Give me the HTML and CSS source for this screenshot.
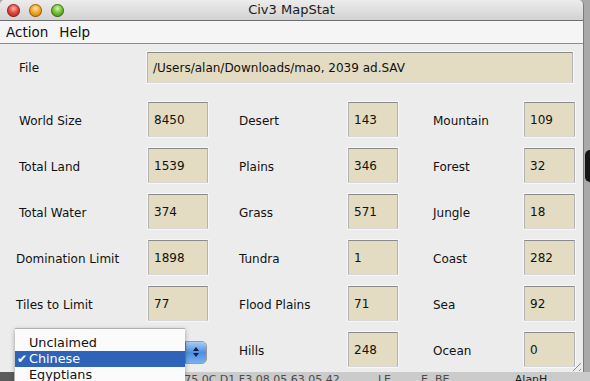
FILE: index.html
```html
<!DOCTYPE html>
<html lang="en">
<head>
    <meta charset="UTF-8">
    <title>Civ3 MapStat</title>
    <link rel="stylesheet" href="styles.css">
</head>
<body>
    <div class="desk">
        <div class="window">
            <div class="titlebar">
                <div class="lights">
                    <span class="light red"></span>
                    <span class="light amber"></span>
                    <span class="light green"></span>
                </div>
                <div class="title">Civ3 MapStat</div>
            </div>
            <div class="menubar">
                <span>Action</span>
                <span>Help</span>
            </div>

            <div class="content">
                <div class="file-row">
                    <label class="file-label">File</label>
                    <div class="field file-field">/Users/alan/Downloads/mao, 2039 ad.SAV</div>
                </div>

                <div class="stats">
                    <span class="lbl">World Size</span><div class="field">8450</div>
                    <span class="lbl col2">Desert</span><div class="field">143</div>
                    <span class="lbl col3">Mountain</span><div class="field">109</div>

                    <span class="lbl">Total Land</span><div class="field">1539</div>
                    <span class="lbl col2">Plains</span><div class="field">346</div>
                    <span class="lbl col3">Forest</span><div class="field">32</div>

                    <span class="lbl">Total Water</span><div class="field">374</div>
                    <span class="lbl col2">Grass</span><div class="field">571</div>
                    <span class="lbl col3">Jungle</span><div class="field">18</div>

                    <span class="lbl tight">Domination Limit</span><div class="field">1898</div>
                    <span class="lbl col2">Tundra</span><div class="field">1</div>
                    <span class="lbl col3">Coast</span><div class="field">282</div>

                    <span class="lbl tight">Tiles to Limit</span><div class="field">77</div>
                    <span class="lbl col2">Flood Plains</span><div class="field">71</div>
                    <span class="lbl col3">Sea</span><div class="field">92</div>

                    <div class="popup-button">
                        <span class="arrows">
                            <svg width="8" height="12" viewBox="0 0 8 12">
                                <path d="M4 1 L7 5 L1 5 Z" fill="#10204a"/>
                                <path d="M4 11 L7 7 L1 7 Z" fill="#10204a"/>
                            </svg>
                        </span>
                    </div>
                    <span class="lbl col2">Hills</span><div class="field">248</div>
                    <span class="lbl col3">Ocean</span><div class="field">0</div>
                </div>
            </div>

            <ul class="popup-menu">
                <li>Unclaimed</li>
                <li class="selected"><span class="check">&#10004;</span>Chinese</li>
                <li>Egyptians</li>
            </ul>

            <div class="grip"></div>
        </div>

        <div class="side-blob"></div>

        <div class="under-strip">
            <span class="dark-end"></span>
            <span class="hex">75 0C D1 F3 08 05 63 05 42 15</span>
            <span class="hex mid">LE</span>
            <span class="hex mid">E&nbsp; BE |</span>
            <span class="user">AlanH [logout]</span>
        </div>
    </div>
</body>
</html>
```

FILE: styles.css
```css
body {
    margin: 0;
    width: 590px;
    height: 381px;
    overflow: hidden;
    background: #a9a9a9;
    font-family: "DejaVu Sans", Verdana, sans-serif;
    font-size: 12px;
    color: #111;
}
.desk {
    position: relative;
    width: 590px;
    height: 381px;
}
.window {
    position: relative;
    width: 584px;
    height: 372px;
    background: #ececec;
    border-radius: 5px 5px 0 0;
    border-right: 1px solid #7a7a7a;
    box-sizing: border-box;
}

/* Title bar */
.titlebar {
    position: relative;
    height: 20px;
    border-bottom: 1px solid #6e6e6e;
    background: linear-gradient(#ececec, #d2d2d2);
    border-radius: 5px 5px 0 0;
}
.lights {
    position: absolute;
    left: 7px;
    top: 4px;
    display: flex;
    gap: 9px;
}
.light {
    width: 13px;
    height: 13px;
    border-radius: 50%;
    box-shadow: inset 0 0 0 1px rgba(0,0,0,0.35);
}
.light.red {
    background: radial-gradient(circle at 50% 35%, #ffb0a8 0, #e2413a 45%, #a51c16 100%);
}
.light.amber {
    background: radial-gradient(circle at 50% 35%, #ffe2a0 0, #f0a220 45%, #b86a0a 100%);
}
.light.green {
    background: radial-gradient(circle at 50% 35%, #d6f5a8 0, #6cbd2e 45%, #3a7d12 100%);
}
.title {
    text-align: center;
    font-size: 13px;
    line-height: 20px;
    color: #1a1a1a;
}

/* Menu bar */
.menubar {
    height: 22px;
    background: #f5f5f5;
    border-bottom: 1px solid #8c8c8c;
    display: flex;
    gap: 11px;
    padding-left: 6px;
    font-size: 13.5px;
    line-height: 22px;
}

/* Content */
.content {
    padding: 8px 0 0 15px;
}
.file-row {
    display: flex;
    align-items: center;
    height: 31px;
}
.file-label {
    width: 128px;
    padding-left: 4px;
}
.field {
    background: #e3dcc3;
    border: 1px solid;
    border-color: #8a8a8a #b3b3b3 #d8d8d8 #b3b3b3;
    box-shadow: 0 0 0 1px #f7f7f7;
    box-sizing: border-box;
    padding: 1px 0 0 5px;
    display: flex;
    align-items: center;
}
.file-field {
    width: 426px;
    height: 31px;
}

.stats {
    margin-top: 19px;
    display: grid;
    grid-template-columns: 133px 60px 140px 50px 126px 51px;
    grid-auto-rows: 35px;
    row-gap: 11px;
    align-items: center;
}
.stats .field {
    height: 35px;
}
.lbl {
    padding-left: 4px;
    padding-top: 2px;
}
.lbl.tight {
    padding-left: 1px;
}
.lbl.col2 {
    padding-left: 31px;
}
.lbl.col3 {
    padding-left: 35px;
}

/* Popup button under the open menu */
.popup-button {
    grid-column: 1 / span 2;
    height: 21px;
    margin-top: 5px;
    margin-right: 1px;
    border-radius: 5px;
    background: linear-gradient(#fdfdfd, #e2e2e2);
    border: 1px solid #9a9a9a;
    display: flex;
    justify-content: flex-end;
    overflow: hidden;
}
.arrows {
    width: 20px;
    display: flex;
    align-items: center;
    justify-content: center;
    background: linear-gradient(#a9ccf4, #4f8fe0 50%, #78b0f0);
    border-left: 1px solid #5a86c4;
}

/* Open popup menu */
.popup-menu {
    position: absolute;
    left: 15px;
    top: 328px;
    width: 170px;
    margin: 0;
    padding: 6px 0 0 0;
    list-style: none;
    background: #fbfbfb;
    border-top: 1px solid #b0b0b0;
    box-shadow: 0 2px 5px rgba(0,0,0,0.35);
    font-size: 12.8px;
    z-index: 2;
}
.popup-menu li {
    position: relative;
    height: 16px;
    line-height: 16px;
    padding-left: 14px;
}
.popup-menu li.selected {
    background: #2f62b9;
    color: #fff;
}
.check {
    position: absolute;
    left: 2px;
    top: 0;
    font-size: 12px;
}

/* Resize grip */
.grip {
    position: absolute;
    right: 2px;
    bottom: 1px;
    width: 12px;
    height: 12px;
    background: repeating-linear-gradient(135deg, transparent 0 3px, #8d8d8d 3px 4px);
    clip-path: polygon(100% 0, 100% 100%, 0 100%);
}

/* Desktop bits around the window */
.side-blob {
    position: absolute;
    left: 585px;
    top: 150px;
    width: 10px;
    height: 32px;
    border-radius: 6px;
    background: #151515;
}
.under-strip {
    height: 9px;
    background: #cbcbcb;
    display: flex;
    overflow: hidden;
    font-size: 11px;
    line-height: 11px;
    color: #4a4a4a;
}
.under-strip span {
    padding-top: 2px;
}
.dark-end {
    width: 15px;
    background: #5b5b5b;
}
.hex {
    margin-left: 170px;
}
.hex.mid {
    margin-left: 30px;
}
.user {
    margin-left: 60px;
    color: #222;
}
```
